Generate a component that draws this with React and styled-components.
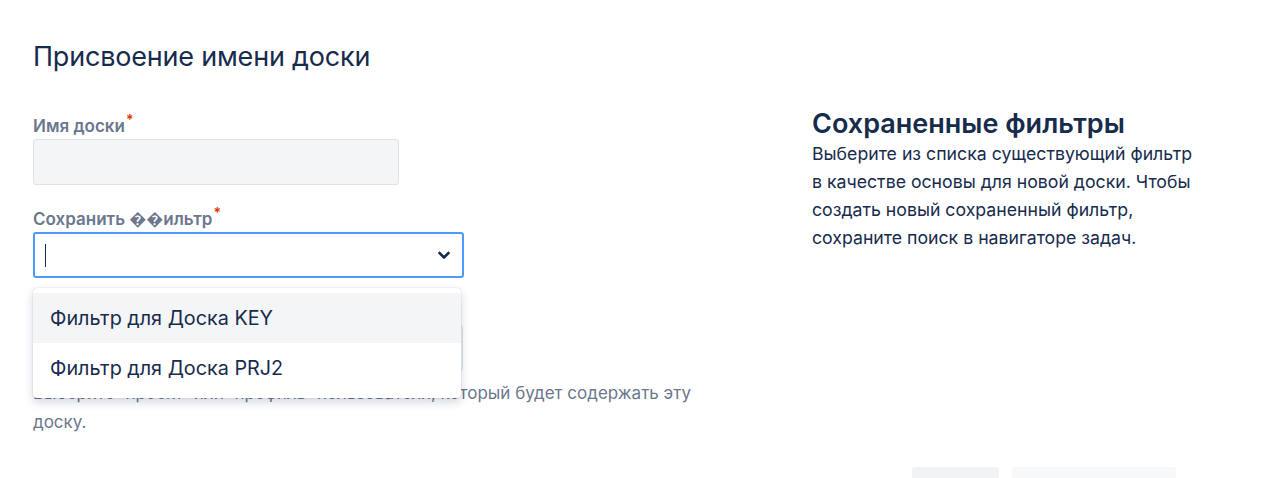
import styled, { createGlobalStyle } from 'styled-components';

const GlobalStyle = createGlobalStyle`
    * {
        margin: 0;
        padding: 0;
        box-sizing: border-box;
    }

    body {
        background-color: #fff;
        font-family: Inter, "Noto Sans", "Liberation Sans", sans-serif;
        color: #172B4D;
    }
`;

const Page = styled.main`
    width: 1280px;
    height: 478px;
    overflow: hidden;
    padding: 41px 0 0 33px;
`;

const Columns = styled.div`
    display: grid;
    grid-template-columns: 779px 400px;
`;

const Left = styled.section`
    display: flex;
    flex-direction: column;
`;

const Title = styled.h1`
    font-size: 27px;
    line-height: 32px;
    font-weight: 400;
    letter-spacing: -0.2px;
    color: #172B4D;
    margin-bottom: 43px;
`;

const Field = styled.div`
    position: relative;
    display: flex;
    flex-direction: column;
    margin-bottom: ${(p) => p.$gap || 0}px;
`;

const Label = styled.label`
    font-size: 17px;
    line-height: 20px;
    font-weight: 600;
    color: #6B778C;
    margin-bottom: 2px;

    &::after {
        content: '*';
        color: #DE350B;
        position: relative;
        top: -7px;
        margin-left: 1px;
        font-size: 14px;
    }
`;

const TextBox = styled.div`
    width: ${(p) => p.$width}px;
    height: 46px;
    background-color: #F4F5F7;
    border: 1px solid #DFE1E6;
    border-radius: 3px;
`;

const SelectBox = styled.div`
    position: relative;
    width: 431px;
    height: 46px;
    background-color: #fff;
    border: 2px solid #4C9AFF;
    border-radius: 3px;
    display: flex;
    align-items: center;
    justify-content: space-between;
    padding: 0 10px 0 10px;
`;

const Caret = styled.span`
    width: 1px;
    height: 23px;
    background-color: #172B4D;
`;

const Chevron = styled.svg`
    width: 16px;
    height: 16px;
`;

const Menu = styled.ul`
    position: absolute;
    top: calc(100% + 10px);
    left: 0;
    width: 428px;
    padding: 5px 0;
    list-style: none;
    background-color: #fff;
    border-radius: 4px;
    box-shadow: 0 4px 10px rgba(9, 30, 66, 0.18), 0 0 1px rgba(9, 30, 66, 0.31);
    z-index: 2;
`;

const Option = styled.li`
    height: 50px;
    display: flex;
    align-items: center;
    padding-left: 17px;
    font-size: 19.8px;
    color: #172B4D;
    background-color: ${(p) => (p.$active ? '#F4F5F7' : '#fff')};
`;

const Help = styled.p`
    font-size: 17px;
    line-height: 29px;
    color: #6B778C;
    width: 680px;
    margin-top: 8px;
`;

const Hidden = styled.span`
    word-spacing: 6px;
`;

const Right = styled.aside`
    padding-top: 67px;
`;

const SideTitle = styled.h2`
    font-size: 27px;
    line-height: 32px;
    font-weight: 600;
    color: #172B4D;
`;

const SideText = styled.p`
    font-size: 17.7px;
    line-height: 28px;
    color: #172B4D;
    width: 390px;
`;

const Footer = styled.div`
    display: flex;
    justify-content: flex-end;
    gap: 13px;
    padding-right: 104px;
    margin-top: 30px;
`;

const Button = styled.div`
    width: ${(p) => p.$width}px;
    height: 40px;
    border-radius: 3px;
    background-color: ${(p) => (p.$primary ? '#F7F8F9' : '#F2F3F5')};
`;

export default function App() {
    return (
        <>
            <GlobalStyle />
            <Page>
                <Columns>
                    <Left>
                        <Title>Присвоение имени доски</Title>
                        <Field $gap={24}>
                            <Label>Имя доски</Label>
                            <TextBox $width={366} />
                        </Field>
                        <Field $gap={24}>
                            <Label>Сохранить ��ильтр</Label>
                            <SelectBox>
                                <Caret />
                                <Chevron viewBox="0 0 16 16">
                                    <path d="M3.5 6 L8 10.5 L12.5 6" fill="none" stroke="#172B4D" strokeWidth="2.6" strokeLinecap="round" strokeLinejoin="round" />
                                </Chevron>
                            </SelectBox>
                            <Menu>
                                <Option $active>Фильтр для Доска KEY</Option>
                                <Option>Фильтр для Доска PRJ2</Option>
                            </Menu>
                        </Field>
                        <Field>
                            <Label>Расположение</Label>
                            <TextBox $width={430} />
                            <Help>
                                <Hidden>Выберите проект или профиль пользователя,</Hidden> который будет содержать эту доску.
                            </Help>
                        </Field>
                    </Left>
                    <Right>
                        <SideTitle>Сохраненные фильтры</SideTitle>
                        <SideText>
                            Выберите из списка существующий фильтр в качестве основы для новой доски. Чтобы создать новый сохраненный фильтр, сохраните поиск в навигаторе задач.
                        </SideText>
                    </Right>
                </Columns>
                <Footer>
                    <Button $width={87} />
                    <Button $width={164} $primary />
                </Footer>
            </Page>
        </>
    );
}
